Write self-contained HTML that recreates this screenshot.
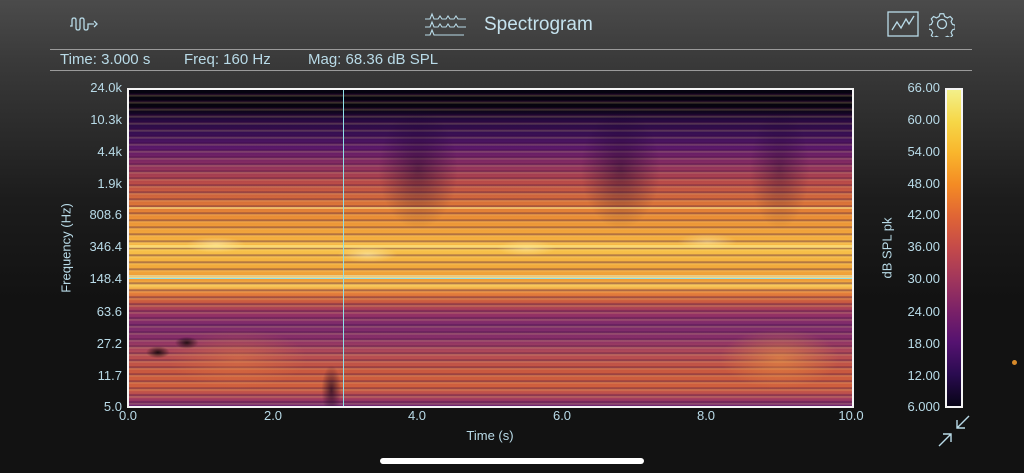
<!DOCTYPE html>
<html><head><meta charset="utf-8"><style>
*{margin:0;padding:0;box-sizing:border-box}
body{width:1024px;height:473px;overflow:hidden;position:relative;font-family:"Liberation Sans",sans-serif;color:#b9dbe8;
background:linear-gradient(180deg,#4b4b4b 0px,#3a3a3a 60px,#1c1c1c 200px,#121212 300px,#121212 473px);}
.abs{position:absolute}
.hr{position:absolute;left:50px;width:922px;height:1px;background:#9a9a9a}
.yl{position:absolute;right:902px;font-size:13px;line-height:13px;transform:translateY(-6px)}
.cl{position:absolute;right:84px;font-size:13px;line-height:13px;transform:translateY(-6px)}
.xl{position:absolute;top:408px;font-size:13px;transform:translateX(-50%)}
#plot{position:absolute;left:127px;top:88px;width:727px;height:320px;border:2px solid #f4f4f4;overflow:hidden;
background:
repeating-linear-gradient(180deg,rgba(0,0,0,0) 0px,rgba(0,0,0,0) 3px,rgba(50,0,60,.45) 4px,rgba(255,230,140,.25) 6px,rgba(0,0,0,0) 7px),
linear-gradient(180deg,#050310 0px,#07040f 18px,#260a40 30px,#3a1055 45px,#5a186a 58px,#8a2e60 75px,#b84a48 92px,#d56c3a 110px,#e88a34 125px,#f2a83c 145px,#f8c24a 160px,#f2ac3c 175px,#ee9a36 190px,#f8c855 196px,#e8843a 202px,#c85a40 212px,#9a3462 222px,#7a2a6c 235px,#8a3068 250px,#b04a58 262px,#c8583f 280px,#d0603e 298px,#a8405c 308px,#6a2270 316px);}
#cb{position:absolute;left:945px;top:88px;width:18px;height:320px;border:2px solid #f4f4f4;
background:linear-gradient(180deg,#f3f08a 0%,#f6d747 10%,#f9b52c 20%,#f48b24 30%,#e06535 40%,#c44a4a 50%,#a0365c 60%,#7a2168 70%,#541270 80%,#2a0b50 90%,#070416 100%)}
</style></head><body>
<svg class="abs" style="left:68px;top:14px" width="36" height="20" viewBox="0 0 36 20" fill="none" stroke="#b9dbe8" stroke-width="1.3">
<path d="M2 12 h2 v-6 q0-2 2-2 q2 0 2 2 v8 q0 2 2 2 q2 0 2-2 v-8 q0-2 2-2 q2 0 2 2 v8 q0 2 2 2 q2 0 2-2 v-4 h6"/><path d="M26 7 l3 3 -3 3"/></svg>
<svg class="abs" style="left:424px;top:12px" width="46" height="26" viewBox="0 0 46 26" fill="none" stroke="#b9dbe8" stroke-width="1.1">
<path d="M1 7 h5 l2-5 2 5 h4 l2-3 2 3 h4 l2-3 2 3 h4 l2-3 2 3 h8"/><path d="M1 15 h5 l2-5 2 5 h4 l2-3 2 3 h4 l2-3 2 3 h4 l2-3 2 3 h8"/><path d="M1 23 h5 l2-5 2 5 h30"/></svg>
<div class="abs" style="left:484px;top:14px;font-size:19px;color:#c5e2ee">Spectrogram</div>
<svg class="abs" style="left:887px;top:11px" width="32" height="26" viewBox="0 0 32 26" fill="none" stroke="#b9dbe8" stroke-width="1.3">
<rect x="1" y="1" width="30" height="24"/><path d="M5 19 l5-8 4 6 5-9 3 5 5-8"/></svg>
<svg class="abs" style="left:929px;top:11px" width="26" height="26" viewBox="0 0 26 26" fill="none" stroke="#b9dbe8" stroke-width="1.3">
<path d="M11 2 h4 l1 3 3 1.5 3-1.5 2.5 2.5 -1.5 3 1.5 3 3 1 v4 l-3 1 -1.5 3 1.5 3 -2.5 2.5 -3-1.5 -3 1.5 -1 3 h-4 l-1-3 -3-1.5 -3 1.5 -2.5-2.5 1.5-3 -1.5-3 -3-1 v-4 l3-1 1.5-3 -1.5-3 2.5-2.5 3 1.5 3-1.5z" transform="scale(0.92) translate(1 1)"/><circle cx="13" cy="13" r="4.5"/></svg>
<div class="hr" style="top:49px"></div>
<div class="hr" style="top:70px"></div>
<div class="abs" style="left:60px;top:51px;font-size:15px">Time: 3.000 s</div>
<div class="abs" style="left:184px;top:51px;font-size:15px">Freq: 160 Hz</div>
<div class="abs" style="left:308px;top:51px;font-size:15px">Mag: 68.36 dB SPL</div>

<div class="yl" style="top:87px">24.0k</div><div class="yl" style="top:119px">10.3k</div><div class="yl" style="top:151px">4.4k</div><div class="yl" style="top:183px">1.9k</div><div class="yl" style="top:214px">808.6</div><div class="yl" style="top:246px">346.4</div><div class="yl" style="top:278px">148.4</div><div class="yl" style="top:311px">63.6</div><div class="yl" style="top:343px">27.2</div><div class="yl" style="top:375px">11.7</div><div class="yl" style="top:406px">5.0</div>
<div class="abs" style="left:66px;top:248px;font-size:13px;transform:translate(-50%,-50%) rotate(-90deg);white-space:nowrap">Frequency (Hz)</div>

<div id="plot">
<div class="abs" style="left:0;top:0;width:100%;height:100%;background:
radial-gradient(ellipse 30px 8px at 33% 52%,rgba(255,250,200,.5),transparent),
radial-gradient(ellipse 30px 8px at 12% 49%,rgba(255,250,200,.5),transparent),
radial-gradient(ellipse 30px 8px at 55% 50%,rgba(255,250,200,.4),transparent),
radial-gradient(ellipse 30px 8px at 80% 48%,rgba(255,250,200,.4),transparent),
radial-gradient(ellipse 60px 30px at 90% 85%,rgba(250,170,60,.45),transparent),
radial-gradient(ellipse 70px 30px at 15% 85%,rgba(240,140,60,.35),transparent),
radial-gradient(ellipse 10px 25px at 28% 95%,rgba(20,0,30,.7),transparent),
radial-gradient(ellipse 12px 6px at 4% 83%,rgba(0,0,0,.8),transparent),
radial-gradient(ellipse 12px 6px at 8% 80%,rgba(0,0,0,.8),transparent),
radial-gradient(ellipse 40px 60px at 40% 25%,rgba(20,0,40,.45),transparent),
radial-gradient(ellipse 40px 60px at 68% 25%,rgba(20,0,40,.45),transparent),
radial-gradient(ellipse 30px 60px at 90% 25%,rgba(20,0,40,.35),transparent)"></div>
<div class="abs" style="left:0;top:185px;width:100%;height:4px;background:#fdf0a0;opacity:.7"></div>
<div class="abs" style="left:0;top:155px;width:100%;height:3px;background:#fde98a;opacity:.6"></div>
<div class="abs" style="left:0;top:117px;width:100%;height:2px;background:#fde98a;opacity:.5"></div>
<div class="abs" style="left:0;top:188px;width:100%;height:1px;background:#8fe0e8"></div>
<div class="abs" style="left:214px;top:0;width:1px;height:100%;background:#8fe0e8"></div>
</div>
<div class="xl" style="left:128px">0.0</div><div class="xl" style="left:273px">2.0</div><div class="xl" style="left:417px">4.0</div><div class="xl" style="left:562px">6.0</div><div class="xl" style="left:706px">8.0</div><div class="xl" style="left:851px">10.0</div>
<div class="abs" style="left:490px;top:428px;font-size:13px;transform:translateX(-50%)">Time (s)</div>

<div id="cb"></div>
<div class="cl" style="top:87px">66.00</div><div class="cl" style="top:119px">60.00</div><div class="cl" style="top:151px">54.00</div><div class="cl" style="top:183px">48.00</div><div class="cl" style="top:214px">42.00</div><div class="cl" style="top:246px">36.00</div><div class="cl" style="top:278px">30.00</div><div class="cl" style="top:311px">24.00</div><div class="cl" style="top:343px">18.00</div><div class="cl" style="top:375px">12.00</div><div class="cl" style="top:406px">6.000</div>
<div class="abs" style="left:887px;top:248px;font-size:13px;transform:translate(-50%,-50%) rotate(-90deg);white-space:nowrap">dB SPL pk</div>
<svg class="abs" style="left:937px;top:414px" width="34" height="34" viewBox="0 0 34 34" fill="none" stroke="#b9dbe8" stroke-width="1.4">
<path d="M32 2 L20 14 M20 6 V14 H28"/><path d="M2 32 L14 20 M6 20 H14 V28"/></svg>
<div class="abs" style="left:1012px;top:360px;width:5px;height:5px;border-radius:50%;background:#d88a2a"></div>
<div class="abs" style="left:380px;top:458px;width:264px;height:6px;border-radius:3px;background:#fff"></div>
</body></html>
